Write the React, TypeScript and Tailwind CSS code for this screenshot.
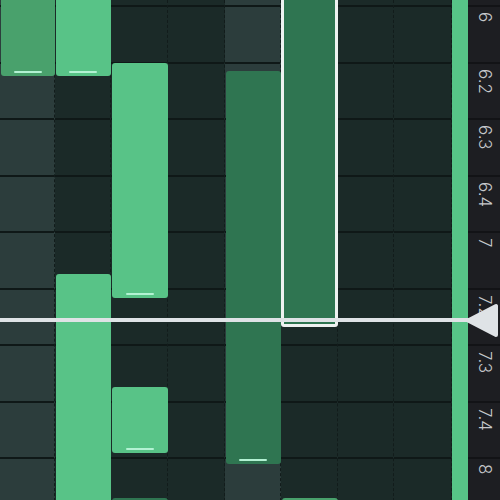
import React from 'react';

const colLefts = [0, 55, 111, 168, 225, 281, 338, 394, 452];
const lightCols = [0, 4];
const rowLabels = ['6', '6.2', '6.3', '6.4', '7', '7.2', '7.3', '7.4', '8'];

type Tone = 'bright' | 'mid' | 'dark';
type Note = { col: number; top: number; bottom: number; tone: Tone; selected?: boolean; marker?: boolean };

const notes: Note[] = [
  { col: 0, top: -10, bottom: 76, tone: 'mid', marker: true },
  { col: 1, top: -10, bottom: 76, tone: 'bright', marker: true },
  { col: 2, top: 63, bottom: 298, tone: 'bright', marker: true },
  { col: 2, top: 387, bottom: 453, tone: 'bright', marker: true },
  { col: 1, top: 274, bottom: 520, tone: 'bright' },
  { col: 4, top: 71, bottom: 464, tone: 'dark', marker: true },
  { col: 5, top: -10, bottom: 327, tone: 'dark', selected: true, marker: true },
  { col: 2, top: 498, bottom: 540, tone: 'dark' },
  { col: 5, top: 498, bottom: 540, tone: 'mid' },
];

const toneClass: Record<Tone, string> = {
  bright: 'bg-[#58c387]',
  mid: 'bg-[#49a16c]',
  dark: 'bg-[#2f7551]',
};

function GridColumn({ index }: { index: number }) {
  const light = lightCols.includes(index);
  return (
    <div
      className={`flex flex-col border-r border-dashed border-[#121c1b] ${
        light ? 'bg-[#2c3d3c]' : 'bg-[#1b2a28]'
      }`}
    >
      <div className="h-[7px] shrink-0 border-b-2 border-[#0f1817]" />
      {rowLabels.map((l) => (
        <div key={l} className="h-[56.5px] shrink-0 border-b-2 border-[#0f1817]" />
      ))}
    </div>
  );
}

function NoteBlock({ note }: { note: Note }) {
  const colW = colLefts[note.col + 1] - colLefts[note.col];
  const left = colLefts[note.col] + (note.selected ? 0 : 0.5);
  const width = note.selected ? colW : colW - 1;
  return (
    <div
      className={`absolute rounded-[3px] ${toneClass[note.tone]} ${
        note.selected ? 'border-[3px] border-[#eef2f1]' : ''
      }`}
      style={{ left, width, top: note.top, height: note.bottom - note.top }}
    >
      {note.marker && (
        <div className="absolute bottom-[3px] left-1/2 -translate-x-1/2 w-[28px] h-[2px] rounded-full bg-[#b3f2d3]" />
      )}
    </div>
  );
}

export default function App() {
  return (
    <div className="relative flex h-[500px] w-[500px] overflow-hidden bg-[#1b2a28]">
      {/* note grid */}
      <div className="relative grid grid-cols-[55px_56px_57px_57px_56px_57px_56px_58px] w-[452px] shrink-0">
        {Array.from({ length: 8 }).map((_, i) => (
          <GridColumn key={i} index={i} />
        ))}
        {notes.map((n, i) => (
          <NoteBlock key={i} note={n} />
        ))}
      </div>

      {/* loop bar */}
      <div className="w-[16px] shrink-0 bg-[#57c487]" />

      {/* ruler */}
      <div className="flex flex-1 flex-col bg-[#1d1e22]">
        <div className="h-[7px] shrink-0 border-b-2 border-[#121316]" />
        {rowLabels.map((l) => (
          <div
            key={l}
            className="h-[56.5px] shrink-0 border-b-2 border-[#121316] flex justify-center pt-[5px]"
          >
            <span
              className="[writing-mode:vertical-rl] text-[17px] leading-none text-[#c6c8cb]"
              style={{ fontFamily: 'Inter, "Liberation Sans", sans-serif', fontWeight: 300 }}
            >
              {l}
            </span>
          </div>
        ))}
      </div>

      {/* playhead */}
      <div className="absolute left-0 top-[318px] h-[4px] w-[472px] bg-[#dfe3e6]" />
      <svg className="absolute left-[464px] top-[303px]" width="36" height="36" viewBox="0 0 36 36">
        <path
          d="M4 17.5 L32 3 L32 32 Z"
          fill="#dfe3e6"
          stroke="#dfe3e6"
          strokeWidth="4"
          strokeLinejoin="round"
        />
      </svg>
    </div>
  );
}
